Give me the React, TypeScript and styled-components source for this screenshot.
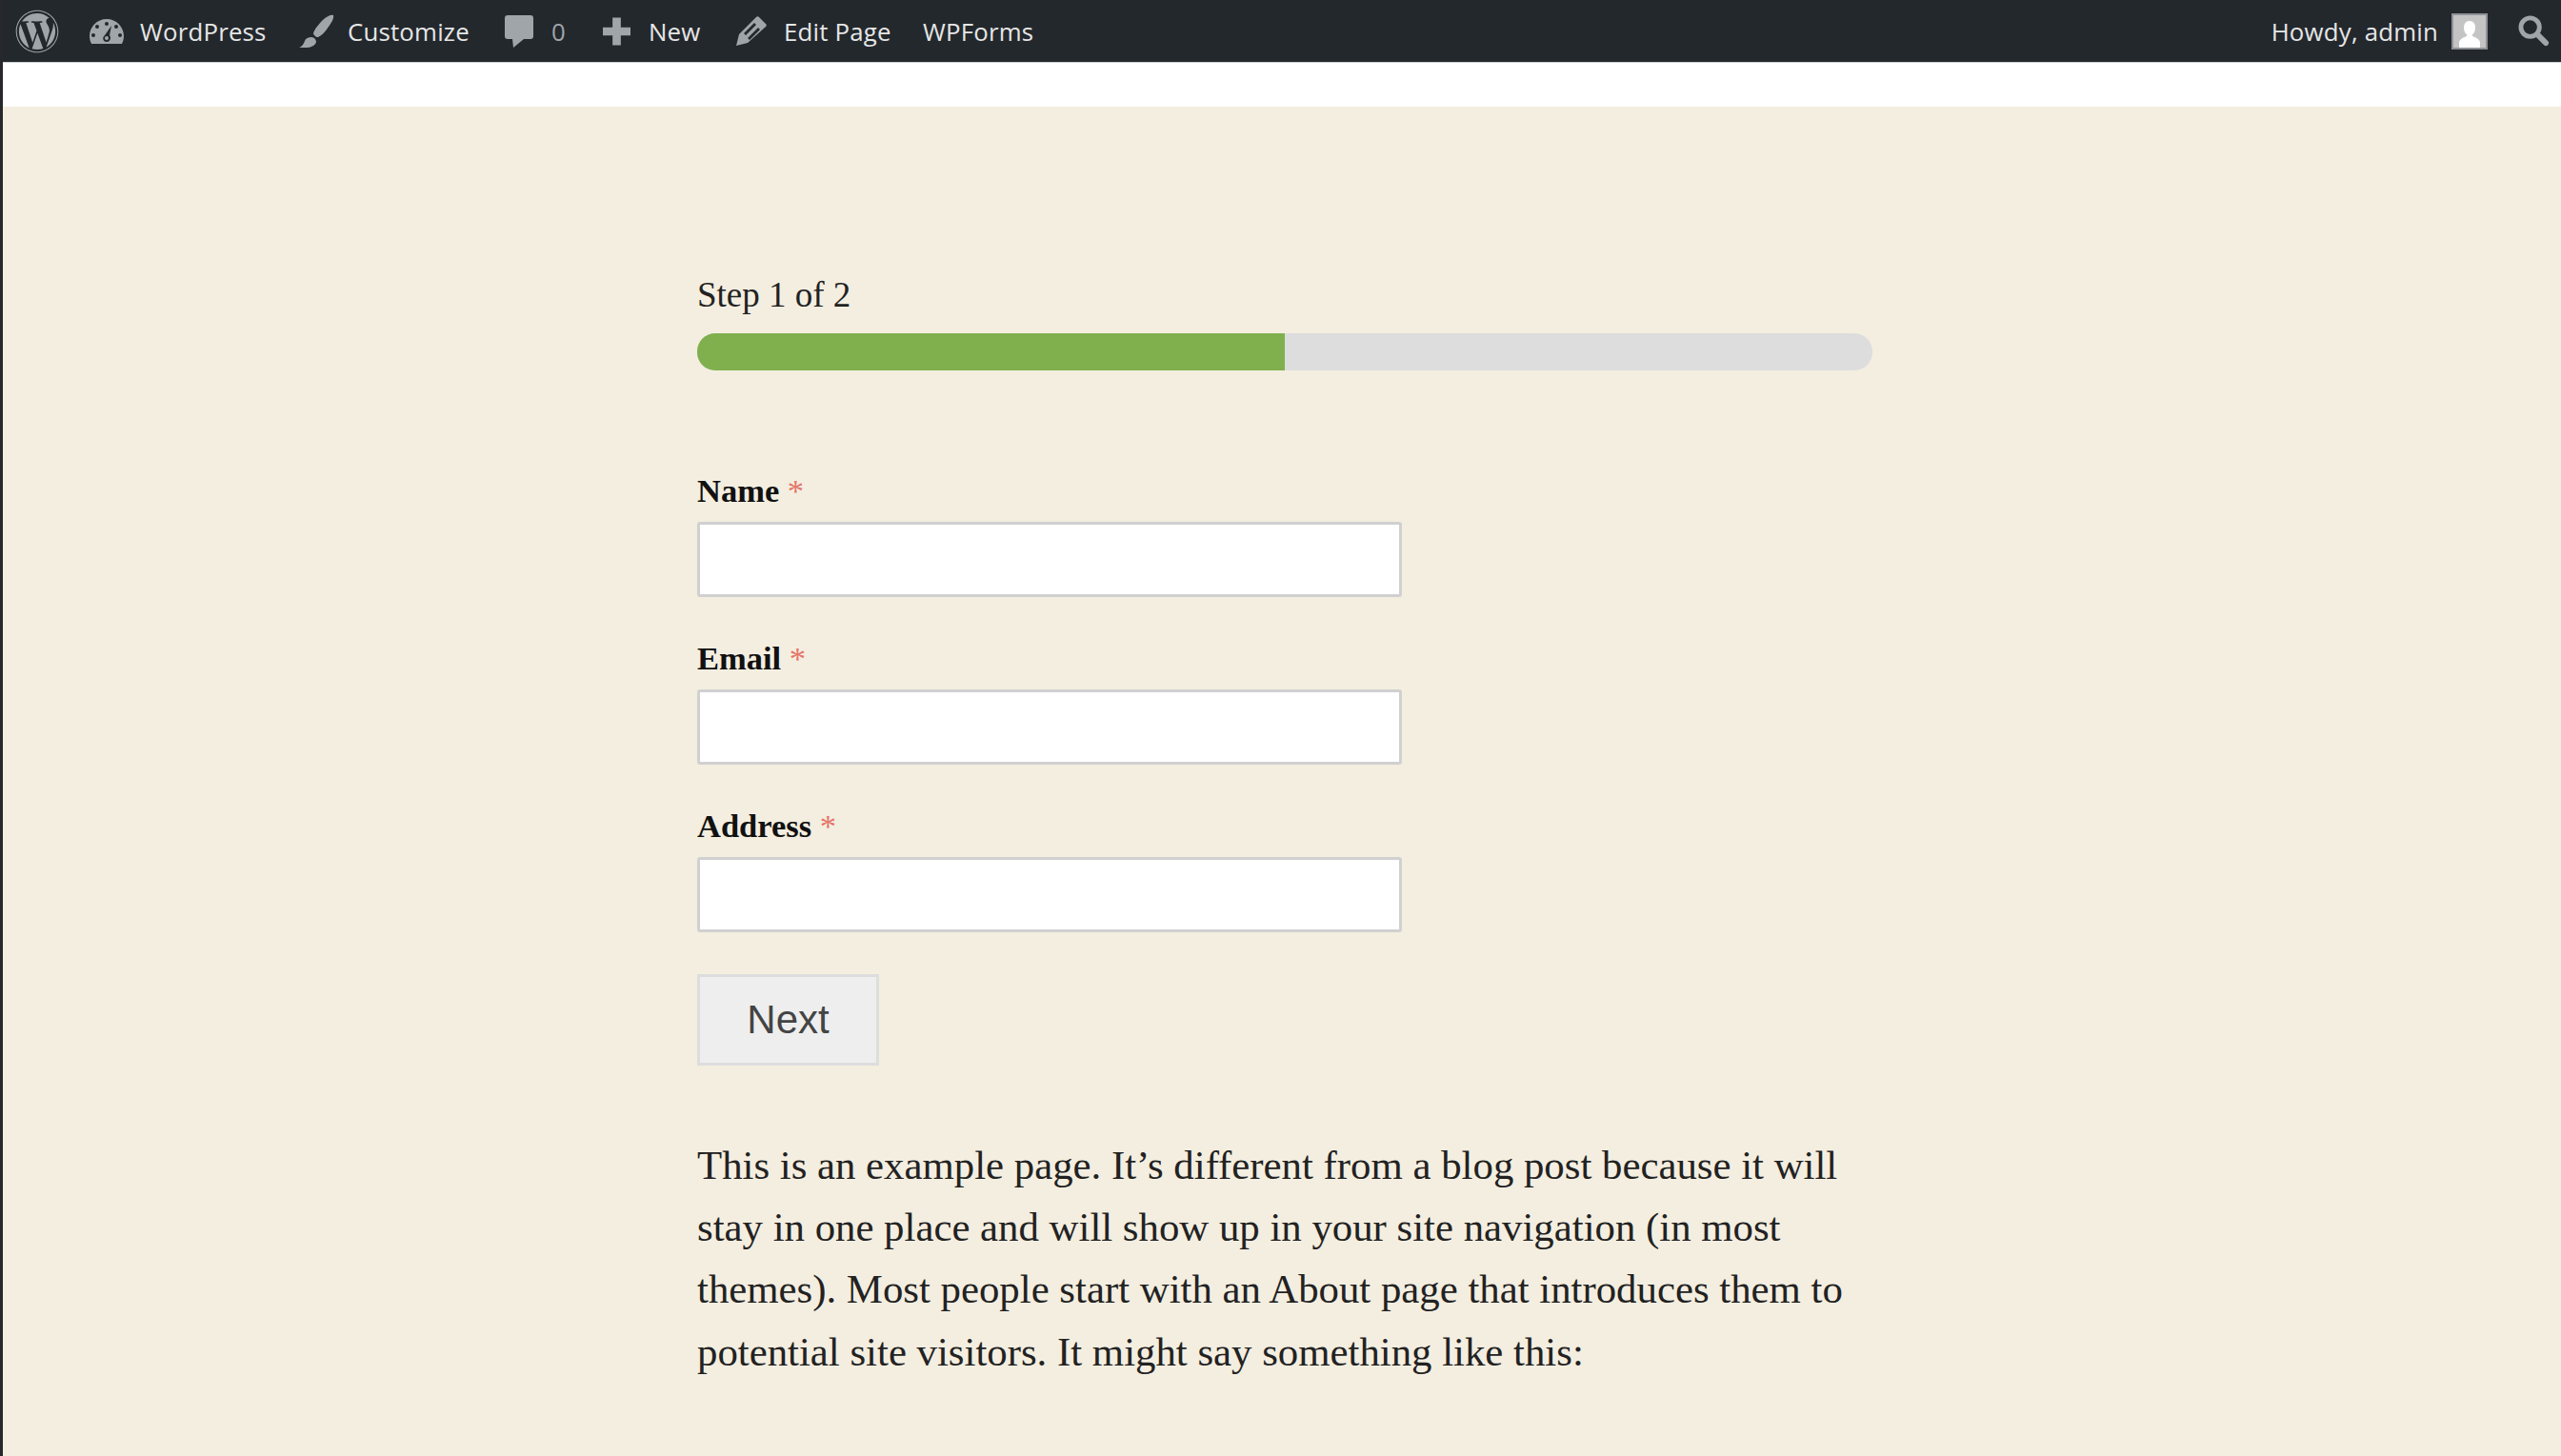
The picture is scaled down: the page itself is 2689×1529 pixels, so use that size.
import React from 'react';
import styled, { createGlobalStyle } from 'styled-components';
import { FaWordpress } from 'react-icons/fa';

const ICON = '#a0a5aa';

const GlobalStyle = createGlobalStyle`
  html, body {
    margin: 0;
    padding: 0;
    background: #26282b;
  }
`;

function App() {
  return (
    <Page>
      <GlobalStyle />
      <AdminBar>
        <BarGroup>
          <LogoItem><FaWordpress size={46} color={ICON} /></LogoItem>
          <BarItem $gap={17} $width={220}>
            <svg width="36" height="26" viewBox="0 0 36 26">
              <path
                fill={ICON}
                fillRule="evenodd"
                d="M18 0C8 0 0 8 0 18c0 3 1 6 2 8h32c1-2 2-5 2-8C36 8 28 0 18 0zM18 3a2 2 0 110 4 2 2 0 010-4zM8 6a2 2 0 110 4 2 2 0 010-4zM28 6a2 2 0 110 4 2 2 0 010-4zM4 15a2 2 0 110 4 2 2 0 010-4zM32 15a2 2 0 110 4 2 2 0 010-4zM23 7l-2 10c2 2 1 7-3 7s-5-5-2-7z M18 18a2 2 0 100 4 2 2 0 000-4z"
              />
            </svg>
            <BarText>WordPress</BarText>
          </BarItem>
          <BarItem $gap={14} $width={216}>
            <svg width="37" height="35" viewBox="0 0 37 35">
              <path fill={ICON} d="M36 1c1 3-2 8-5 12-3 5-7 9-11 11-1 0-2 0-3-1s-2-2-2-3c1-4 6-10 10-14 4-4 9-6 11-5zM13 24c3 0 5 3 5 5-1 4-6 6-11 6-3 0-6 0-7 0 3-1 5-4 6-7 1-3 4-4 7-4z" />
            </svg>
            <BarText>Customize</BarText>
          </BarItem>
          <BarItem $gap={19} $width={103}>
            <svg width="30" height="34" viewBox="0 0 30 34">
              <path fill={ICON} d="M3 0h24c2 0 3 1 3 3v19c0 2-1 3-3 3h-7L9 34l-1-9H3c-2 0-3-1-3-3V3c0-2 1-3 3-3z" />
            </svg>
            <CountText>0</CountText>
          </BarItem>
          <BarItem $gap={19} $width={140}>
            <svg width="29" height="30" viewBox="0 0 30 30">
              <path fill={ICON} d="M10.5 0h9v10.5H30v9H19.5V30h-9V19.5H0v-9h10.5z" />
            </svg>
            <BarText>New</BarText>
          </BarItem>
          <BarItem $gap={18} $width={196}>
            <svg width="32" height="31" viewBox="0 0 32 31">
              <path fill={ICON} fillRule="evenodd" d="M21 1c1-1 2-1 3 0l7 7c1 1 1 2 0 3L12 28 0 31l3-12zM8 18L19 7l2 2L10 20zM12 23l11-11 2 2L14 25z" />
            </svg>
            <BarText>Edit Page</BarText>
          </BarItem>
          <BarItem $gap={0}>
            <BarText>WPForms</BarText>
          </BarItem>
        </BarGroup>
        <BarGroup>
          <BarText>Howdy, admin</BarText>
          <Avatar>
            <svg width="34" height="34" viewBox="0 0 34 34">
              <path fill="#fff" d="M17 6c4 0 6 3 6 7 0 3-1 6-3 7v2c3 1 7 3 8 6v6H6v-6c1-3 5-5 8-6v-2c-2-1-3-4-3-7 0-4 2-7 6-7z" />
            </svg>
          </Avatar>
          <SearchIcon width="33" height="33" viewBox="0 0 34 34">
            <circle cx="13" cy="13" r="10" fill="none" stroke={ICON} strokeWidth="5" />
            <path stroke={ICON} strokeWidth="6" strokeLinecap="round" d="M21 21l9 9" />
          </SearchIcon>
        </BarGroup>
      </AdminBar>
      <WhiteBand />
      <Content>
        <Column>
          <StepLabel>Step 1 of 2</StepLabel>
          <Progress>
            <ProgressFill />
          </Progress>
          <Field>
            <Label>Name <Required>*</Required></Label>
            <Input type="text" />
          </Field>
          <Field>
            <Label>Email <Required>*</Required></Label>
            <Input type="text" />
          </Field>
          <Field>
            <Label>Address <Required>*</Required></Label>
            <Input type="text" />
          </Field>
          <NextButton type="button">Next</NextButton>
          <Paragraph>
            This is an example page. It’s different from a blog post because it will stay in one place and will show up in your site navigation (in most themes). Most people start with an About page that introduces them to potential site visitors. It might say something like this:
          </Paragraph>
        </Column>
      </Content>
    </Page>
  );
}

const Page = styled.div`
  height: 1529px;
  overflow: hidden;
  margin-left: 3px;
  background: #f4eee0;
  display: flex;
  flex-direction: column;
`;

const AdminBar = styled.div`
  height: 65px;
  flex: none;
  margin-left: -3px;
  background: #23282d;
  display: flex;
  justify-content: space-between;
  align-items: center;
  padding: 0 12px 0 16px;
  border-bottom: 1px solid #c9d0d4;
`;

const BarGroup = styled.div`
  display: flex;
  align-items: center;
`;

const LogoItem = styled.div`
  width: 78px;
  display: flex;
  align-items: center;
`;

const BarItem = styled.div<{ $gap: number; $width?: number }>`
  display: flex;
  align-items: center;
  gap: ${props => props.$gap}px;
  width: ${props => (props.$width ? `${props.$width}px` : 'auto')};
`;

const BarText = styled.span`
  font-family: 'Open Sans', 'Noto Sans', sans-serif;
  font-size: 25.8px;
  letter-spacing: 0.2px;
  color: #e6e6e6;
  white-space: nowrap;
`;

const CountText = styled(BarText)`
  color: ${ICON};
`;

const Avatar = styled.div`
  width: 38px;
  height: 38px;
  margin-left: 14px;
  box-sizing: border-box;
  border: 2px solid #8e9296;
  background: #c4c4c4;
  display: flex;
  align-items: flex-end;
  justify-content: center;
  overflow: hidden;
`;

const SearchIcon = styled.svg`
  margin-left: 32px;
`;

const WhiteBand = styled.div`
  height: 46px;
  flex: none;
  background: #fff;
`;

const Content = styled.div`
  flex: 1;
  display: flex;
  justify-content: flex-start;
  padding-left: 729px;
`;

const Column = styled.div`
  width: 1234px;
  padding-top: 177px;
`;

const StepLabel = styled.div`
  font-family: 'Liberation Serif', serif;
  font-size: 37px;
  line-height: 42px;
  color: #222;
`;

const Progress = styled.div`
  margin-top: 19px;
  height: 39px;
  border-radius: 19px;
  background: #ddd;
  overflow: hidden;
`;

const ProgressFill = styled.div`
  width: 50%;
  height: 100%;
  background: #7fb04d;
`;

const Field = styled.div`
  margin-top: 108px;

  & + & {
    margin-top: 46px;
  }
`;

const Label = styled.label`
  display: block;
  font-family: 'Liberation Serif', serif;
  font-size: 34.5px;
  font-weight: bold;
  line-height: 36px;
  color: #111;
  margin-bottom: 15px;
`;

const Required = styled.span`
  color: #e57368;
  font-weight: normal;
`;

const Input = styled.input`
  display: block;
  width: 740px;
  height: 79px;
  box-sizing: border-box;
  border: 3px solid #d0d0d0;
  border-radius: 3px;
  background: #fff;
`;

const NextButton = styled.button`
  display: block;
  margin-top: 44px;
  width: 191px;
  height: 96px;
  box-sizing: border-box;
  border: 3px solid #ddd;
  background: #eee;
  font-family: 'Liberation Sans', sans-serif;
  font-size: 42px;
  color: #444;
`;

const Paragraph = styled.p`
  margin: 72px 0 0;
  font-family: 'Liberation Serif', serif;
  font-size: 42.8px;
  line-height: 65.2px;
  color: #222;
`;

export default App;
